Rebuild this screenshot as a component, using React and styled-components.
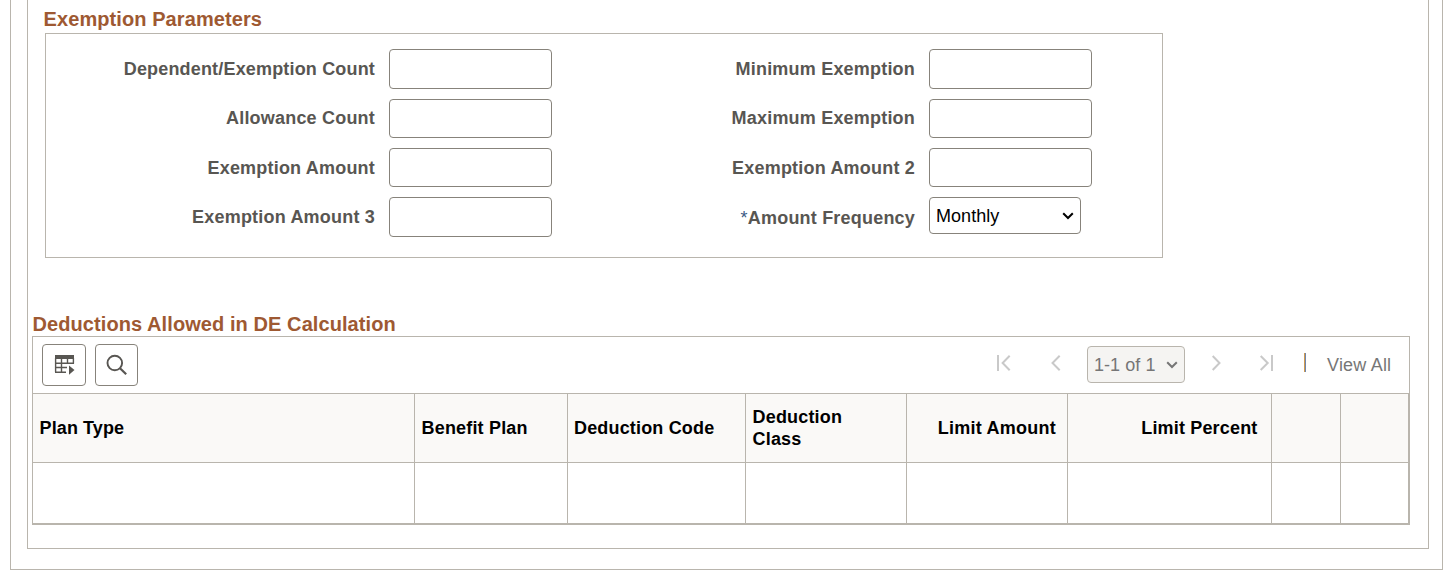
import styled, { createGlobalStyle } from 'styled-components'

const GlobalStyle = createGlobalStyle`
  * {
    box-sizing: border-box;
  }

  body {
    margin: 0;
    background: #fff;
    overflow: hidden;
    font-family: 'Liberation Sans', Arial, sans-serif;
    font-size: 18px;
  }
`

const Page = styled.div`
  width: 1433px;
  height: 570px;
  margin-left: 10px;
  padding: 0 13px 20px 16px;
  border: 1px solid #b9b5ad;
  border-top: 0;
`

const Section = styled.div`
  height: 549px;
  padding: 8px 18px 0 4px;
  border: 1px solid #b9b5ad;
  border-top: 0;
`

const Title = styled.h2`
  margin: 0;
  height: ${props => props.$height};
  padding-left: ${props => props.$indent || 0};
  font-size: 20px;
  line-height: 23px;
  letter-spacing: .08px;
  color: #9e5932;
`

const GroupBox = styled.div`
  display: grid;
  grid-template-columns: 329px 163px 349px 163px;
  grid-template-rows: 40px 39px 39px 40px;
  column-gap: 14px;
  row-gap: 10px;
  width: 1118px;
  height: 225px;
  margin: 0 0 55px 13px;
  padding-top: 15px;
  border: 1px solid #b9b5ad;
`

const Label = styled.label`
  text-align: right;
  padding-top: ${props => props.$top || '10px'};
  line-height: 21px;
  font-weight: bold;
  letter-spacing: ${props => props.$spacing || '.2px'};
  white-space: nowrap;
  color: #585652;
`

const Required = styled.span`
  font-weight: normal;
  color: #3d5a85;
`

const Input = styled.input`
  width: 163px;
  height: 100%;
  padding: 0 6px;
  border: 1px solid #87837b;
  border-radius: 4px;
  background: #fff;
  font: inherit;
`

const SelectBox = styled.button`
  display: flex;
  align-items: center;
  justify-content: space-between;
  width: ${props => props.$width};
  height: 37px;
  padding: 1px 6px 0;
  border: 1px solid ${props => props.$muted ? '#b9b5ad' : '#87837b'};
  border-radius: 4px;
  background: ${props => props.$muted ? '#f5f4f2' : '#fff'};
  color: ${props => props.$muted ? '#767676' : '#000'};
  font: inherit;
  line-height: 21px;
  letter-spacing: .05px;
`

const Grid = styled.div`
  width: 1378px;
  border: 1px solid #b9b5ad;
  border-right: 0;
  border-bottom: 0;
`

const Toolbar = styled.div`
  display: flex;
  height: 56px;
  padding: 7px 17px 0 9px;
  border-right: 1px solid #b9b5ad;
`

const ToolButton = styled.button`
  display: flex;
  width: ${props => props.$width};
  height: 42px;
  margin-right: 9px;
  padding: 0;
  border: 1px solid #87837b;
  border-radius: 4px;
  background: #fff;
`

const Pager = styled.div`
  display: flex;
  margin-left: auto;
  padding-top: 2px;
`

const PagerIcon = styled.svg`
  display: block;
  width: 16px;
  height: 18px;
  margin: 8px ${props => props.$after || 0} 0 ${props => props.$before || 0};
  fill: none;
  stroke: #c9c9c9;
  stroke-width: 2;
`

const Separator = styled.span`
  width: 2px;
  height: 19px;
  margin: 7px 21px 0 0;
  border-left: 1px solid #d09a50;
  background: #6f86ad;
`

const ViewAll = styled.span`
  width: 65px;
  padding-top: 9px;
  line-height: 21px;
  letter-spacing: .2px;
  white-space: nowrap;
  color: #767676;
`

const Table = styled.div`
  display: grid;
  grid-template-columns: 382px 153px 178px 161px 161px 204px 69px 68px;
  grid-template-rows: 69px 61px;
  border-top: 1px solid #b9b5ad;
  border-right: 1px solid #b9b5ad;
  border-bottom: 1px solid #b9b5ad;
`

const HeadCell = styled.div`
  display: flex;
  align-items: center;
  justify-content: ${props => props.$right ? 'flex-end' : 'flex-start'};
  padding: 0 ${props => props.$right || '30px'} 0 ${props => props.$left || '6.6px'};
  border-right: 1px solid #b9b5ad;
  border-bottom: 1px solid #b9b5ad;
  background: #faf9f7;
  font-weight: bold;
  line-height: 22px;
  letter-spacing: ${props => props.$spacing || '.17px'};
  color: #000;
`

const Cell = styled.div`
  border-right: 1px solid #b9b5ad;
  border-bottom: 1px solid #b9b5ad;
`

const Chevron = () => (
  <svg width='12' height='8' viewBox='0 0 12 8' fill='none' stroke='currentColor' strokeWidth='2'>
    <path d='M1.2 1.2L6 6L10.8 1.2' />
  </svg>
)

const TableIcon = () => (
  <svg width='42' height='40' viewBox='0 0 42 40' fill='none' stroke='#585652'>
    <path d='M12 12h19' strokeWidth='4' />
    <path d='M12.6 13v14M18.5 13v14M24.5 13v5M30.4 13v5.5M12 18.3h19M12 22.5h12M12 27.2h11' strokeWidth='1.4' />
    <path d='M26 20.5L31.5 25L26 29.7z' fill='#585652' stroke='none' />
  </svg>
)

const SearchIcon = () => (
  <svg width='41' height='40' viewBox='0 0 41 40' fill='none' stroke='#585652' strokeWidth='1.9'>
    <circle cx='18.8' cy='18' r='7.3' />
    <path d='M24 23.2L30.2 29.2' strokeWidth='2.2' />
  </svg>
)

const columns = [
  { name: 'Plan Type', spacing: '.1px' },
  { name: 'Benefit Plan' },
  { name: 'Deduction Code', left: '6px' },
  { name: 'Deduction Class' },
  { name: 'Limit Amount', right: '11px', spacing: '.25px' },
  { name: 'Limit Percent', right: '13.5px' },
  { name: '' },
  { name: '' }
]

const App = () => (
  <>
    <GlobalStyle />
    <Page>
      <Section>
        <Title $height='25px' $indent='11.6px'>Exemption Parameters</Title>
        <GroupBox>
          <Label htmlFor='dependents' $spacing='.17px'>Dependent/Exemption Count</Label>
          <Input id='dependents' />
          <Label htmlFor='minimum'>Minimum Exemption</Label>
          <Input id='minimum' />
          <Label htmlFor='allowance' $top='9px'>Allowance Count</Label>
          <Input id='allowance' />
          <Label htmlFor='maximum' $top='9px'>Maximum Exemption</Label>
          <Input id='maximum' />
          <Label htmlFor='amount'>Exemption Amount</Label>
          <Input id='amount' />
          <Label htmlFor='amount2'>Exemption Amount 2</Label>
          <Input id='amount2' />
          <Label htmlFor='amount3'>Exemption Amount 3</Label>
          <Input id='amount3' />
          <Label htmlFor='frequency' $top='11px'><Required>*</Required>Amount Frequency</Label>
          <SelectBox id='frequency' $width='152px'>Monthly<Chevron /></SelectBox>
        </GroupBox>
        <Title $height='23px' $indent='.5px'>Deductions Allowed in DE Calculation</Title>
        <Grid>
          <Toolbar>
            <ToolButton $width='44px' aria-label='Grid actions'><TableIcon /></ToolButton>
            <ToolButton $width='43px' aria-label='Find'><SearchIcon /></ToolButton>
            <Pager>
              <PagerIcon $after='37px' viewBox='0 0 16 18'><path d='M3 1v16M14.7 1.7L7.6 9L14.7 16.3' /></PagerIcon>
              <PagerIcon $after='23px' viewBox='0 0 16 18'><path d='M11.7 1.7L4.5 9L11.7 16.3' /></PagerIcon>
              <SelectBox $width='98px' $muted>1-1 of 1<Chevron /></SelectBox>
              <PagerIcon $before='23px' $after='34px' viewBox='0 0 16 18'><path d='M4.7 2L11.5 9L4.7 16' /></PagerIcon>
              <PagerIcon $after='30px' viewBox='0 0 16 18'><path d='M2.7 2L9.7 9L2.7 16M14 1v16' /></PagerIcon>
              <Separator />
              <ViewAll>View All</ViewAll>
            </Pager>
          </Toolbar>
          <Table>
            {columns.map((column, i) => (
              <HeadCell key={i} $left={column.left} $right={column.right} $spacing={column.spacing}>{column.name}</HeadCell>
            ))}
            {columns.map((column, i) => <Cell key={i} />)}
          </Table>
        </Grid>
      </Section>
    </Page>
  </>
)

export default App
